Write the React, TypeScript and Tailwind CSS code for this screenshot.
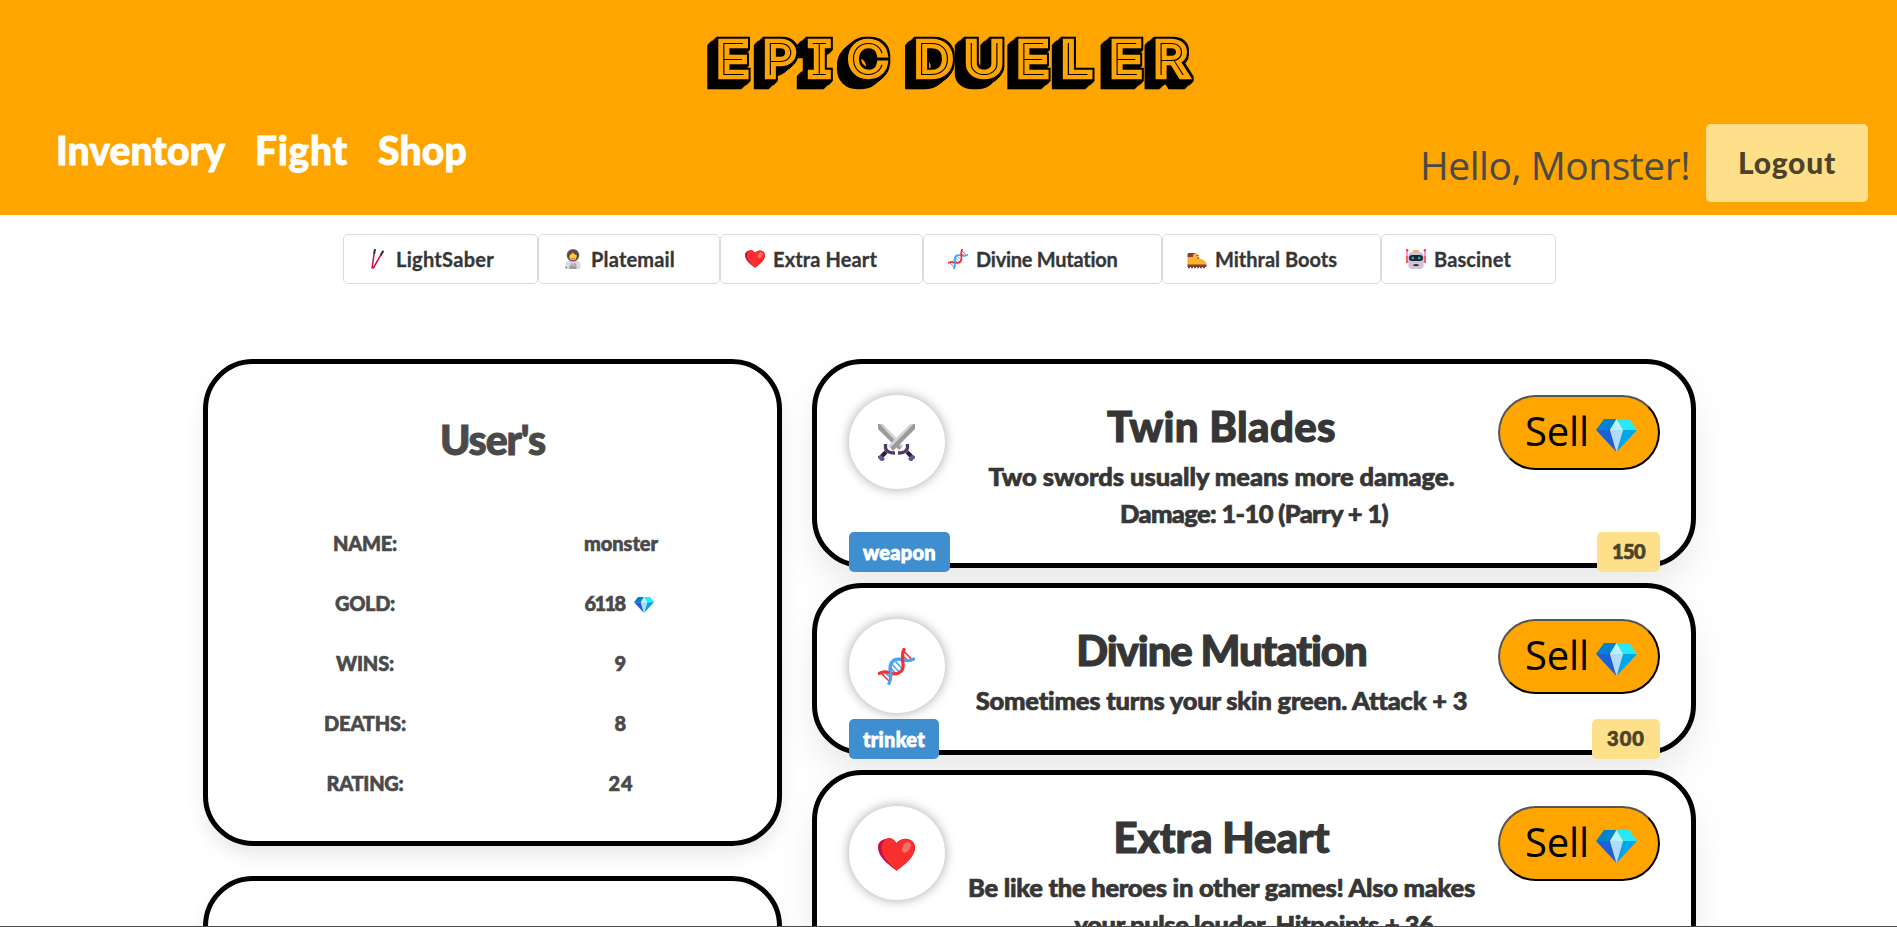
import { useLayoutEffect, useRef, useState } from "react";
import type { ReactNode } from "react";

function Fit({ w, children, className = "" }: { w: number; children: string; className?: string }) {
  const ref = useRef<HTMLSpanElement>(null);
  const [spacing, setSpacing] = useState(0);
  useLayoutEffect(() => {
    if (ref.current) {
      const natural = ref.current.getBoundingClientRect().width;
      setSpacing((w - natural) / children.length);
    }
  }, []);
  return (
    <span ref={ref} className={`inline-block whitespace-nowrap ${className}`} style={{ letterSpacing: `${spacing}px` }}>
      {children}
    </span>
  );
}

function Logo() {
  return (
    <svg className="h-[75px] w-[500px] [font-family:Inter,sans-serif] font-thin [font-feature-settings:'cv08','kern'_0]" viewBox="0 0 500 75">
      <filter id="extrude" filterUnits="userSpaceOnUse" x="0" y="0" width="440" height="75" colorInterpolationFilters="sRGB">
        <feMorphology in="SourceAlpha" operator="dilate" radius="1.5" result="rim" />
        <feOffset in="rim" dx="-1" dy="1" result="o1" />
        <feMerge result="e1"><feMergeNode in="rim" /><feMergeNode in="o1" /></feMerge>
        <feOffset in="e1" dx="-2" dy="2" result="o2" />
        <feMerge result="e2"><feMergeNode in="e1" /><feMergeNode in="o2" /></feMerge>
        <feOffset in="e2" dx="-4" dy="4" result="o3" />
        <feMerge result="e3"><feMergeNode in="e2" /><feMergeNode in="o3" /></feMerge>
        <feOffset in="e3" dx="-1" dy="1" result="o4" />
        <feMerge><feMergeNode in="e3" /><feMergeNode in="o4" /><feMergeNode in="SourceGraphic" /></feMerge>
      </filter>
      <g transform="scale(1.16 1)">
        <text
          x="16 56 95.500 129.500 165 186.500 230 274.500 313 355 393"
          y="50.500"
          fontSize={44}
          fill="#000"
          stroke="#ffa500"
          strokeWidth={8.5}
          strokeLinejoin="miter"
          paintOrder="stroke"
          filter="url(#extrude)"
        >
          EPIC DUELER
        </text>
      </g>
    </svg>
  );
}

function Gem({ className }: { className: string }) {
  return (
    <svg className={className} viewBox="0 0 41 33" preserveAspectRatio="none">
      <path d="M8 0h12.500L14 11H0z" fill="#0084ce" />
      <path d="M20.500 0H33l8 11H27z" fill="#26eafc" />
      <path d="M20.500 0L27 11H14z" fill="#b4f5fb" />
      <path d="M0 11h14l6.500 22z" fill="#1b5fdb" />
      <path d="M41 11H27l-6.500 22z" fill="#00a6ed" />
      <path d="M14 11h13l-6.500 22z" fill="#aedbff" />
    </svg>
  );
}

function Heart({ className }: { className: string }) {
  return (
    <svg className={className} viewBox="0 0 32 32">
      <path d="M16 30C11 26 0 19 0 9.500C0 3 9 -1 16 6C23 -1 32 3 32 10C32 19 21 26 16 30z" fill="#ca0b4a" />
      <path d="M16.500 30C12 26 2.500 18.500 3 9.500C3.300 6 7 1.500 10 1.600C12.500 2 15 4 16 6C23 -1 32 3 32 10C32 19 21 26 16.500 30z" fill="#f92f2f" />
      <ellipse cx="24.600" cy="9.800" rx="3.200" ry="5.200" transform="rotate(32 24.600 9.800)" fill="#f57066" />
    </svg>
  );
}

function Dna({ className }: { className: string }) {
  return (
    <svg className={className} viewBox="0 0 32 32" fill="none" strokeLinecap="round">
      <path d="M6.500 21.500l4 4M12.500 14.500l6 6.500M15.500 12l5.500 6M11.500 18l4 4" stroke="#46a4fb" strokeWidth="1.300" />
      <path d="M21 6.500l5 4.500M22.500 3l6 6M3.500 22.500l6 6" stroke="#f92f2f" strokeWidth="1.300" />
      <path d="M30.800 9.500C24 14 20 7 14 10.500C7 15 14 23 9.500 30.800" stroke="#46a4fb" strokeWidth="2.800" />
      <path d="M1.200 22C8 17.500 12 25 18 21.500C26 17 18 9.500 22.500 1.200" stroke="#f92f2f" strokeWidth="2.800" />
      <path d="M11.300 22C9.500 17 10 13.500 14 10.500" stroke="#46a4fb" strokeWidth="2.800" />
    </svg>
  );
}

function Swords({ className }: { className: string }) {
  return (
    <svg className={className} viewBox="0 0 37 37">
      <path d="M0 0h4.500L25 22l-4 4L0 5z" fill="#9b9b9b" />
      <path d="M2 0h3l20 21.500-2 2z" fill="#d3d3d3" />
      <path d="M37 0h-4.500L11 22l4 5L37 5z" fill="#9b9b9b" />
      <path d="M35.500 0h-3L10 22l2 2z" fill="#d3d3d3" />
      <path d="M3 33l5-5M34 33l-5-5" stroke="#321b41" strokeWidth="4" />
      <path d="M7.500 20v4q1 5 9.500 5M29.500 20v4q-1 5-9.500 5" fill="none" stroke="#533566" strokeWidth="3.300" />
      <path d="M0 32l3-1 4 4-2 2-2 0-3-3zM37 32l-3-1-4 4 2 2 2 0 3-3z" fill="#635994" />
    </svg>
  );
}

function Sabers({ className }: { className: string }) {
  return (
    <svg className={className} viewBox="0 0 20 20" fill="none">
      <path d="M4 19.500L6.800 0" stroke="#ca0b4a" strokeWidth="1.500" />
      <path d="M5 19.500L15.200 2" stroke="#ca0b4a" strokeWidth="1.500" />
      <path d="M6.200 5L7 0M12.500 6.500L15.400 1.800" stroke="#402a32" strokeWidth="1.800" />
    </svg>
  );
}

function Astronaut({ className }: { className: string }) {
  return (
    <svg className={className} viewBox="0 0 20 20">
      <path d="M2.500 20v-4q0-4 4-4.500h7q4 .5 4 4.500v4z" fill="#dcdcdc" />
      <circle cx="10" cy="6.300" r="6.300" fill="#636363" />
      <circle cx="10" cy="6.500" r="4.800" fill="#402a32" />
      <ellipse cx="10" cy="7" rx="3.800" ry="4.200" fill="#ffc83d" />
      <path d="M6 6.500q3-.8 3.600-3.300Q11 5.500 14 6.300 13.500 1.800 10 1.800T6 6.500z" fill="#6d4534" />
      <path d="M8.500 9.500q1.500 1 3 0" stroke="#bb1d80" strokeWidth=".8" fill="none" />
      <path d="M6.500 16.500h7V20h-7z" fill="#9b9b9b" />
      <path d="M8 14.500h1.600v1.300H8zM2.300 17.800h1.700v1.500H2.300z" fill="#3f8bff" />
      <path d="M11 14.500h1.600v1.300H11z" fill="#f92f60" />
    </svg>
  );
}

function Boot({ className }: { className: string }) {
  return (
    <svg className={className} viewBox="0 0 20 20">
      <path d="M.5 16V8Q2 5 1 4h9q1 5 4 6 5.500 1.500 5.500 6z" fill="#ffb02e" />
      <path d="M.5 8V5Q.5 4 2 4h6q-2.500 1.500-2 4z" fill="#7d4533" />
      <path d="M9.500 6.500h2M10 9h2" stroke="#7d4533" strokeWidth="1" />
      <path d="M.5 15.500h19V18H.5z" fill="#7d4533" />
      <path d="M1 18.500h18" stroke="#7d4533" strokeWidth="1.300" strokeDasharray="2 1" />
    </svg>
  );
}

function Robot({ className }: { className: string }) {
  return (
    <svg className={className} viewBox="0 0 20 20">
      <path d="M1 1v13M19 1v13" stroke="#f8626c" strokeWidth="1.200" />
      <circle cx="1.200" cy="1.200" r="1.200" fill="#f92f60" />
      <circle cx="18.800" cy="1.200" r="1.200" fill="#f92f60" />
      <path d="M0 7h2.500v7H0zM17.500 7H20v7h-2.500z" fill="#f8626c" />
      <rect x="7" y="1" width="6" height="3" rx="1" fill="#ffb02e" />
      <rect x="2.300" y="3" width="15.400" height="17" rx="4" fill="#cdc4d6" />
      <rect x="3" y="6" width="14" height="6" rx="3" fill="#212121" />
      <circle cx="6.800" cy="9" r="1.500" fill="#00a6ed" />
      <circle cx="13.200" cy="9" r="1.500" fill="#00a6ed" />
      <rect x="7.500" y="15.300" width="5" height="1.800" rx=".5" fill="#212121" />
    </svg>
  );
}

const equipped: { name: string; text: number; box: string; icon: ReactNode }[] = [
  { name: "LightSaber", text: 98, box: "w-[195px]", icon: <Sabers className="size-5" /> },
  { name: "Platemail", text: 84, box: "w-[182px]", icon: <Astronaut className="size-5" /> },
  { name: "Extra Heart", text: 104, box: "w-[203px]", icon: <Heart className="size-5" /> },
  { name: "Divine Mutation", text: 142, box: "w-[239px]", icon: <Dna className="size-5" /> },
  { name: "Mithral Boots", text: 122, box: "w-[219px]", icon: <Boot className="size-5" /> },
  { name: "Bascinet", text: 77, box: "w-[175px]", icon: <Robot className="size-5" /> },
];

const stats: { label: string; lw: number; value: string; vw: number; gem?: boolean }[] = [
  { label: "NAME:", lw: 64, value: "monster", vw: 74 },
  { label: "GOLD:", lw: 60, value: "6118", vw: 40, gem: true },
  { label: "WINS:", lw: 58, value: "9", vw: 13 },
  { label: "DEATHS:", lw: 82, value: "8", vw: 13 },
  { label: "RATING:", lw: 77, value: "24", vw: 25 },
];

interface Item {
  name: string;
  nw: number;
  lines: [string, number][];
  kind: string;
  kw: number;
  price: string;
  height: string;
  icon: ReactNode;
}

const items: Item[] = [
  {
    name: "Twin Blades", nw: 229, kind: "weapon", kw: 73, price: "150", height: "h-[209px]",
    lines: [["Two swords usually means more damage.", 466], ["Damage: 1-10 (Parry + 1)", 268]],
    icon: <Swords className="size-[37px]" />,
  },
  {
    name: "Divine Mutation", nw: 291, kind: "trinket", kw: 62, price: "300", height: "h-[172px]",
    lines: [["Sometimes turns your skin green. Attack + 3", 491]],
    icon: <Dna className="size-[37px]" />,
  },
  {
    name: "Extra Heart", nw: 216, kind: "trinket", kw: 62, price: "300", height: "h-[209px]",
    lines: [["Be like the heroes in other games! Also makes", 507], ["your pulse louder. Hitpoints + 36", 359]],
    icon: <Heart className="mt-0.5 size-[37px]" />,
  },
];

function ItemCard({ item }: { item: Item }) {
  return (
    <section className={`relative flex shrink-0 items-start rounded-[50px] border-5 border-black bg-white pt-[31px] pr-[31px] pl-8 shadow-[0_20px_40px_-5px_rgba(10,10,10,0.1)] ${item.height}`}>
      <div className="flex h-[94px] w-24 shrink-0 items-center justify-center rounded-[50%] bg-white pr-0.5 shadow-[0_0_12px_rgba(0,0,0,0.35)]">
        {item.icon}
      </div>
      <div className="flex min-w-0 flex-1 flex-col items-center pt-1 text-[#363636]">
        <h2 className="mb-1 text-[42px] leading-[55px] font-black [-webkit-text-stroke:1.1px_currentColor]"><Fit w={item.nw}>{item.name}</Fit></h2>
        {item.lines.map(([text, w], i) => (
          <p key={text} className={`-mx-4 text-[25.5px] leading-[37px] font-black [-webkit-text-stroke:0.7px_currentColor] ${i === 1 ? "pl-[65px]" : ""}`}><Fit w={w}>{text}</Fit></p>
        ))}
      </div>
      <button className="flex h-[75px] w-[162px] shrink-0 items-center rounded-[38px] border-2 border-t-[#555] border-r-black border-b-black border-l-[#555] bg-[#ffa500] pl-[25px] text-[40px] leading-none text-black [font-family:'Open_Sans','Noto_Sans',sans-serif]">
        <Fit w={64} className="-mt-1">Sell</Fit>
        <Gem className="ml-[7px] mt-[5px] h-[33px] w-[41px]" />
      </button>
      <span className="absolute -bottom-[9px] left-8 flex h-10 items-center rounded-[5px] bg-[#3e8ed0] px-[14px] text-[20px] font-black text-white [-webkit-text-stroke:0.8px_currentColor]">
        <Fit w={item.kw}>{item.kind}</Fit>
      </span>
      <span className="absolute right-[31px] -bottom-[9px] flex h-10 items-center rounded-[5px] bg-[#ffe08a] px-[15px] text-[20px] font-black text-[#4d432a] [-webkit-text-stroke:0.7px_currentColor]">
        <Fit w={item.price === "150" ? 33 : 38} className="-mt-0.5">{item.price}</Fit>
      </span>
    </section>
  );
}

export default function App() {
  return (
    <div className="flex h-[927px] w-full flex-col overflow-hidden bg-white [font-family:Lato,'Open_Sans',sans-serif]">
      <div className="flex min-h-0 flex-1 flex-col overflow-hidden">
        <header className="h-[215px] shrink-0 bg-[#ffa500] pt-[25px]">
          <div className="flex h-[70px] justify-center"><Logo /></div>
          <div className="flex items-start justify-between pt-[29px] pr-[29px] pl-14">
            <nav className="flex gap-[30px] text-[39px] leading-[53px] font-black text-white [-webkit-text-stroke:0.8px_currentColor]">
              <Fit w={169}>Inventory</Fit>
              <Fit w={93}>Fight</Fit>
              <Fit w={89}>Shop</Fit>
            </nav>
            <div className="flex items-center text-[#4a4a4a]">
              <span className="pt-0.5 text-[39px] leading-none [font-family:'Open_Sans','Noto_Sans',sans-serif]"><Fit w={270}>Hello, Monster!</Fit></span>
              <button className="ml-[16px] flex h-[78px] w-[162px] items-center justify-center rounded-[5px] bg-[#ffe08a] text-[30px] font-black text-[#4d432a]"><Fit w={98} className="-mt-0.5">Logout</Fit></button>
            </div>
          </div>
        </header>
        <ul className="mt-[19px] ml-[343px] flex shrink-0">
          {equipped.map((e) => (
            <li key={e.name} className={`flex h-[50px] items-center rounded-[5px] border border-[#dbdbdb] pl-6 text-[20px] font-bold text-[#363636] [-webkit-text-stroke:0.3px_currentColor] ${e.box}`}>
              {e.icon}
              <Fit w={e.text} className="ml-2">{e.name}</Fit>
            </li>
          ))}
        </ul>
        <main className="mt-[75px] flex gap-[30px] pl-[203px]">
          <div className="flex w-[579px] flex-col gap-[30px]">
            <section className="h-[487px] shrink-0 rounded-[50px] border-5 border-black bg-white shadow-[0_10px_20px_-2px_rgba(10,10,10,0.1)]">
              <h1 className="mt-[48px] text-center text-[41px] leading-[56px] font-black text-[#4a4a4a] [-webkit-text-stroke:1px_currentColor]"><Fit w={105}>User's</Fit></h1>
              <div className="mt-[45px] pl-[29px]">
                {stats.map((s) => (
                  <div key={s.label} className="grid h-[60px] grid-cols-[256px_256px] place-items-center text-[20px] font-black text-[#4a4a4a] [-webkit-text-stroke:0.6px_currentColor]">
                    <Fit w={s.lw}>{s.label}</Fit>
                    <span className={s.gem ? "flex items-center gap-[9px] pr-1" : "flex items-center"}>
                      <Fit w={s.vw}>{s.value}</Fit>
                      {s.gem && <Gem className="mt-1 h-4 w-5" />}
                    </span>
                  </div>
                ))}
              </div>
            </section>
            <section className="h-[487px] shrink-0 rounded-[50px] border-5 border-black bg-white shadow-[0_10px_20px_-2px_rgba(10,10,10,0.1)]" />
          </div>
          <div className="flex w-[884px] flex-col gap-[15px]">
            {items.map((item) => <ItemCard key={item.name} item={item} />)}
          </div>
        </main>
      </div>
      <div className="h-px shrink-0 bg-[#4a4a4a]" />
    </div>
  );
}
